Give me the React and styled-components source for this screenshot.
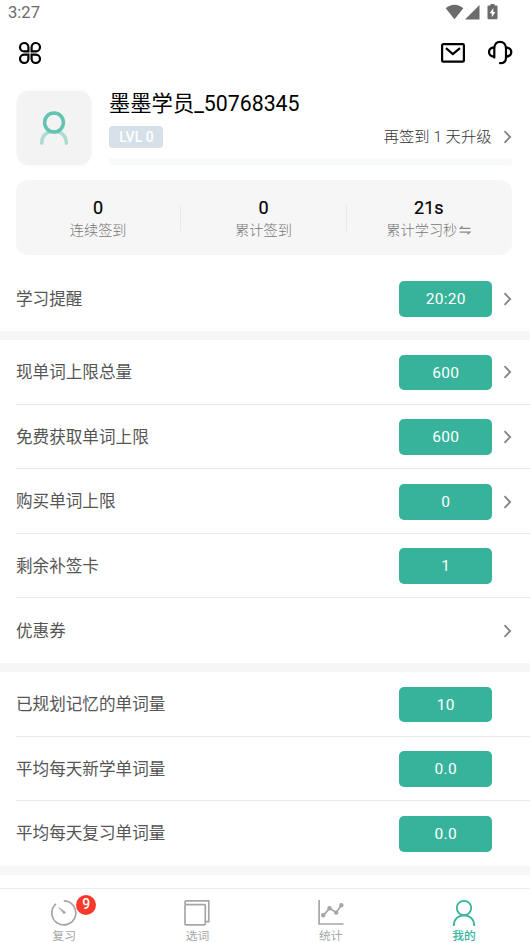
import React from "react";
import styled, { createGlobalStyle } from "styled-components";

const GREEN_BASE = "#37b39b";
const GREY_BASE = "#f6f6f6";

const GlobalStyle = createGlobalStyle`
  * {
    box-sizing: border-box;
  }
  body {
    margin: 0;
    background: #fff;
    font-family: Roboto, "Noto Sans CJK SC", sans-serif;
  }
  svg {
    display: block;
    flex: none;
  }
`;

const Page = styled.div`
  display: flex;
  flex-direction: column;
  width: 530px;
  height: 943px;
  overflow: hidden;
  background: #fff;
`;

const StatusBar = styled.div`
  display: flex;
  justify-content: space-between;
  height: 26px;
  padding: 0 31px 0 8px;
  line-height: 26px;
  font-size: 16.6px;
  color: #6b6b6b;
`;

const Toolbar = styled.div`
  display: flex;
  align-items: center;
  height: 54px;
  padding: 0 17px 0 18px;
`;

const ToolbarRight = styled.div`
  display: flex;
  align-items: center;
  gap: 22px;
  margin-left: auto;
`;

const Profile = styled.div`
  display: flex;
  height: 100px;
  padding: 10px 18px 0 16px;
`;

const Avatar = styled.div`
  display: flex;
  align-items: center;
  justify-content: center;
  width: 76px;
  height: 76px;
  border: 1px solid #f8f8f8;
  border-radius: 13px;
  background: #f3f3f3;
`;

const ProfileInfo = styled.div`
  flex: 1;
  margin-left: 17px;
`;

const Name = styled.div`
  height: 28px;
  line-height: 28px;
  font-size: 21.3px;
  color: #000;
`;

const LevelRow = styled.div`
  display: flex;
  align-items: center;
  height: 22px;
  margin-top: 8px;
`;

const Level = styled.div`
  width: 54px;
  height: 22px;
  padding-left: 1px;
  border-radius: 4px;
  background: #d5e0e9;
  color: #fff;
  font-size: 14px;
  font-weight: 500;
  line-height: 22px;
  text-align: center;
`;

const LevelHint = styled.div`
  margin: 0 11.5px 0 auto;
  padding-bottom: 5px;
  font-size: 15.3px;
  font-weight: 300;
  color: #333;
`;

const Progress = styled.div`
  height: 7px;
  margin-top: 10px;
  border-radius: 4px;
  background: #f8f9fb;
`;

const Stats = styled.div`
  display: flex;
  height: 75px;
  margin: 0 18px 0 16px;
  padding: 17px 0 0;
  border-radius: 12px;
  background: ${GREY_BASE};
`;

const Stat = styled.div`
  position: relative;
  flex: 1;
  padding-right: 1px;
  text-align: center;
  & + &::before {
    content: "";
    position: absolute;
    left: -1px;
    top: 8px;
    width: 1px;
    height: 26px;
    background: #e8e8e8;
  }
`;

const StatValue = styled.div`
  height: 22px;
  line-height: 22px;
  font-size: 18px;
  color: #000;
  -webkit-text-stroke: 0.2px #000;
`;

const StatLabel = styled.div`
  display: flex;
  align-items: center;
  justify-content: center;
  gap: 2px;
  height: 22px;
  line-height: 22px;
  font-size: 14.2px;
  font-weight: 300;
  color: #777;
`;

const Section = styled.div`
  padding-left: 16px;
  border-bottom: 9px solid ${GREY_BASE};
  margin-top: ${(props) => props.$top || "0px"};
`;

const Row = styled.div`
  display: flex;
  align-items: center;
  height: 64.6px;
  padding: 1.4px 18px 0 0;
  border-bottom: 1px solid #e9e9e9;
  &:last-child {
    border-bottom-color: transparent;
  }
`;

const RowLabel = styled.div`
  flex: 1;
  padding-top: 1.4px;
  font-size: 16.6px;
  line-height: 24px;
  color: #555;
`;

const RowValue = styled.div`
  width: 92.6px;
  height: 35.8px;
  border-radius: 5px;
  background: ${GREEN_BASE};
  color: #fff;
  font-size: 15.5px;
  letter-spacing: 0.3px;
  line-height: 36px;
  text-align: center;
`;

const RowArrow = styled.div`
  display: flex;
  justify-content: flex-end;
  width: 20px;
`;

const TabBar = styled.div`
  display: flex;
  height: 55px;
  margin-top: auto;
  border-top: 1px solid #ececec;
`;

const Tab = styled.div`
  display: flex;
  flex-direction: column;
  align-items: center;
  flex: 0 0 133.3px;
  padding: 10px 5px 0 0;
  font-size: 11.8px;
  line-height: 19px;
  color: ${(props) => (props.$active ? GREEN_BASE : "#a6a6a6")};
  font-weight: ${(props) => (props.$active ? 500 : 400)};
`;

const TabIcon = styled.div`
  position: relative;
  height: 28px;
`;

const Badge = styled.div`
  position: absolute;
  left: 25px;
  top: -4px;
  width: 20px;
  height: 20px;
  border-radius: 50%;
  background: #fb382c;
  color: #fff;
  font-size: 14px;
  font-weight: 500;
  line-height: 19px;
  text-align: center;
`;

function Arrow() {
  return (
    <svg width="9" height="14" viewBox="0 0 9 14" fill="none">
      <path d="M1.5 1.2 7.2 7 1.5 12.8" stroke="#858585" strokeWidth="1.8" />
    </svg>
  );
}

function StatusIcons() {
  return (
    <svg width="54" height="26" viewBox="0 0 54 26" fill="#6b6b6b">
      <path d="M.7 8.3C5.7 3.6 13.3 3.6 18.3 8.3L9.5 19.3Z" />
      <path d="M34.5 5V19.6H20Z" />
      <path
        fillRule="evenodd"
        d="M45.5 4h4v1.4h2.2q.8 0 .8.8v12q0 1-1 1h-8q-1 0-1-1v-12q0-.8.8-.8h2.2ZM48.3 8l-3.6 5.2h2.1v4l3.6-5.2h-2.1Z"
      />
    </svg>
  );
}

function CloverIcon() {
  const leaf = "M10.4 10.4H6A4.2 4.2 0 1 1 10.4 6Z";
  return (
    <svg width="24" height="24" viewBox="0 0 24 24" fill="none" stroke="#000" strokeWidth="2.2">
      <path d={leaf} />
      <path d={leaf} transform="matrix(-1 0 0 1 24 0)" />
      <path d={leaf} transform="matrix(1 0 0 -1 0 24)" />
      <path d={leaf} transform="matrix(-1 0 0 -1 24 24)" />
    </svg>
  );
}

function MailIcon() {
  return (
    <svg width="24" height="20" viewBox="0 0 24 20" fill="none" stroke="#000" strokeWidth="2.2">
      <rect x="1.1" y="1.2" width="21.8" height="17.4" rx="1.2" />
      <path d="M5 5.1 11.8 11 19 5.1" />
    </svg>
  );
}

function HeadsetIcon() {
  return (
    <svg width="26" height="26" viewBox="0 0 26 26" fill="none" stroke="#000" strokeWidth="2.2">
      <path d="M7.3 17.6V8.6C7.3 4.2 9.6 1.8 13 1.8S19 4.2 19 8.6v8.8c0 3.7-2.2 5.8-6 5.8" strokeLinecap="round" />
      <path d="M7.3 7.4C3.4 7.8 2 9.6 2 12S3.4 16.3 7.3 16.7" />
      <path d="M19 7.4c3.9.4 5.3 2.2 5.3 4.6S22.9 16.3 19 16.7" />
    </svg>
  );
}

function AvatarIcon() {
  return (
    <svg width="30" height="36" viewBox="0 0 30 36" fill="none" strokeWidth="3.5">
      <path d="M2.7 33.2C2.7 26 7 21.5 15 21.5S27.3 26 27.3 33.2" stroke="#a9ddd2" strokeLinecap="round" />
      <circle cx="15" cy="12.5" r="9.4" stroke="#62c3b1" fill="#f3f3f3" />
    </svg>
  );
}

function SwapIcon() {
  return (
    <svg width="12" height="10" viewBox="0 0 12 10" fill="none" stroke="#888" strokeWidth="1.2">
      <path d="M11.3 3.4H1.2L3.6 1.2M.7 7.2H10.8L8.4 9.4" />
    </svg>
  );
}

function ReviewIcon() {
  return (
    <svg width="26" height="28" viewBox="0 0 26 28" fill="none" stroke="#a6a6a6" strokeWidth="1.7">
      <path d="M12.8 1.9A12 12 0 1 1 5 4.8" />
      <path d="M7.8 8.6 14.6 13.2 13 14.9Z" fill="#a6a6a6" strokeWidth=".6" />
    </svg>
  );
}

function WordsIcon() {
  return (
    <svg width="26" height="28" viewBox="0 0 26 28" fill="none" stroke="#a6a6a6" strokeWidth="1.7">
      <path d="M1 5.5V3Q1 1.9 2.2 1.9H24.8V22.6H21.5" />
      <rect x="1" y="5.6" width="20.3" height="20.3" rx=".8" />
    </svg>
  );
}

function ChartIcon() {
  return (
    <svg width="26" height="28" viewBox="0 0 26 28" fill="none" stroke="#a6a6a6" strokeWidth="1.7">
      <path d="M1.1 1v24H25.5M5.2 16.3 11.7 9.4l6.5 4.3L23.4 6" />
      <g fill="#a6a6a6" stroke="none">
        <circle cx="5.2" cy="16.3" r="2.2" />
        <circle cx="11.5" cy="9.3" r="2.2" />
        <circle cx="18.2" cy="13.6" r="2.2" />
        <circle cx="23.3" cy="6.2" r="2.2" />
      </g>
    </svg>
  );
}

function MineIcon() {
  return (
    <svg width="26" height="28" viewBox="0 0 26 28" fill="none" stroke={GREEN_BASE} strokeWidth="1.8">
      <circle cx="13" cy="9" r="7.2" />
      <path d="M2.7 27C2.7 20.3 7 16.3 13 16.3S23.3 20.3 23.3 27" />
    </svg>
  );
}

const sections = [
  [{ label: "学习提醒", value: "20:20", arrow: true }],
  [
    { label: "现单词上限总量", value: "600", arrow: true },
    { label: "免费获取单词上限", value: "600", arrow: true },
    { label: "购买单词上限", value: "0", arrow: true },
    { label: "剩余补签卡", value: "1" },
    { label: "优惠券", arrow: true }
  ],
  [
    { label: "已规划记忆的单词量", value: "10" },
    { label: "平均每天新学单词量", value: "0.0" },
    { label: "平均每天复习单词量", value: "0.0" }
  ]
];

const tabs = [
  { label: "复习", icon: ReviewIcon, badge: 9 },
  { label: "选词", icon: WordsIcon },
  { label: "统计", icon: ChartIcon },
  { label: "我的", icon: MineIcon, active: true }
];

function Header() {
  return (
    <>
      <StatusBar>
        <span>3:27</span>
        <StatusIcons />
      </StatusBar>
      <Toolbar>
        <CloverIcon />
        <ToolbarRight>
          <MailIcon />
          <HeadsetIcon />
        </ToolbarRight>
      </Toolbar>
    </>
  );
}

function App() {
  return (
    <Page>
      <GlobalStyle />
      <Header />
      <Profile>
        <Avatar>
          <AvatarIcon />
        </Avatar>
        <ProfileInfo>
          <Name>墨墨学员_50768345</Name>
          <LevelRow>
            <Level>LVL 0</Level>
            <LevelHint>再签到 1 天升级</LevelHint>
            <Arrow />
          </LevelRow>
          <Progress />
        </ProfileInfo>
      </Profile>
      <Stats>
        <Stat>
          <StatValue>0</StatValue>
          <StatLabel>连续签到</StatLabel>
        </Stat>
        <Stat>
          <StatValue>0</StatValue>
          <StatLabel>累计签到</StatLabel>
        </Stat>
        <Stat>
          <StatValue>21s</StatValue>
          <StatLabel>
            累计学习秒
            <SwapIcon />
          </StatLabel>
        </Stat>
      </Stats>
      {sections.map((rows, index) => (
        <Section key={index} $top={index === 0 ? "11.4px" : undefined}>
          {rows.map((row) => (
            <Row key={row.label}>
              <RowLabel>{row.label}</RowLabel>
              {row.value && <RowValue>{row.value}</RowValue>}
              <RowArrow>{row.arrow && <Arrow />}</RowArrow>
            </Row>
          ))}
        </Section>
      ))}
      <TabBar>
        {tabs.map(({ label, icon: Icon, badge, active }) => (
          <Tab key={label} $active={active}>
            <TabIcon>
              <Icon />
              {badge && <Badge>{badge}</Badge>}
            </TabIcon>
            {label}
          </Tab>
        ))}
      </TabBar>
    </Page>
  );
}

export default App;
